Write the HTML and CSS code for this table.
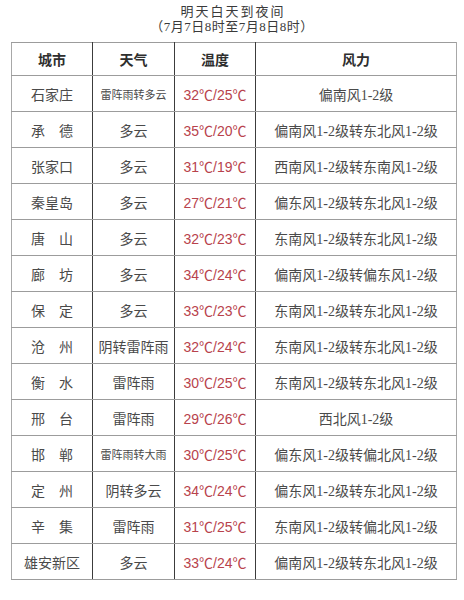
FILE: index.html
```html
<!DOCTYPE html>
<html lang="zh-CN">
<head>
<meta charset="utf-8">
<link rel="stylesheet" href="styles.css">
</head>
<body>
<div class="page">
  <div class="title">
    <div class="t1">明天白天到夜间</div>
    <div class="t2">（7月7日8时至7月8日8时）</div>
  </div>
  <div class="wrap">
    <table class="tbl">
      <colgroup><col class="c1"><col class="c2"><col class="c3"><col class="c4"></colgroup>
      <thead>
        <tr class="head"><th>城市</th><th>天气</th><th>温度</th><th>风力</th></tr>
      </thead>
      <tbody>
        <tr><td class="city">石家庄</td><td class="sm">雷阵雨转多云</td><td class="temp">32℃/25℃</td><td>偏南风1-2级</td></tr>
        <tr><td class="city">承　德</td><td>多云</td><td class="temp">35℃/20℃</td><td>偏南风1-2级转东北风1-2级</td></tr>
        <tr><td class="city">张家口</td><td>多云</td><td class="temp">31℃/19℃</td><td>西南风1-2级转东南风1-2级</td></tr>
        <tr><td class="city">秦皇岛</td><td>多云</td><td class="temp">27℃/21℃</td><td>偏东风1-2级转东北风1-2级</td></tr>
        <tr><td class="city">唐　山</td><td>多云</td><td class="temp">32℃/23℃</td><td>东南风1-2级转东北风1-2级</td></tr>
        <tr><td class="city">廊　坊</td><td>多云</td><td class="temp">34℃/24℃</td><td>偏南风1-2级转偏东风1-2级</td></tr>
        <tr><td class="city">保　定</td><td>多云</td><td class="temp">33℃/23℃</td><td>东南风1-2级转东北风1-2级</td></tr>
        <tr><td class="city">沧　州</td><td>阴转雷阵雨</td><td class="temp">32℃/24℃</td><td>东南风1-2级转东北风1-2级</td></tr>
        <tr><td class="city">衡　水</td><td>雷阵雨</td><td class="temp">30℃/25℃</td><td>东南风1-2级转东北风1-2级</td></tr>
        <tr><td class="city">邢　台</td><td>雷阵雨</td><td class="temp">29℃/26℃</td><td>西北风1-2级</td></tr>
        <tr><td class="city">邯　郸</td><td class="sm">雷阵雨转大雨</td><td class="temp">30℃/25℃</td><td>偏东风1-2级转偏北风1-2级</td></tr>
        <tr><td class="city">定　州</td><td>阴转多云</td><td class="temp">34℃/24℃</td><td>偏东风1-2级转东北风1-2级</td></tr>
        <tr><td class="city">辛　集</td><td>雷阵雨</td><td class="temp">31℃/25℃</td><td>东南风1-2级转偏北风1-2级</td></tr>
        <tr><td class="city">雄安新区</td><td>多云</td><td class="temp">33℃/24℃</td><td>偏南风1-2级转东北风1-2级</td></tr>
      </tbody>
    </table>
  </div>
</div>
</body>
</html>
```
FILE: styles.css
```css
html, body {
  margin: 0;
  padding: 0;
  background: #ffffff;
}
.page {
  width: 464px;
  height: 600px;
  font-family: "Liberation Serif", "Noto Sans CJK SC", serif;
  color: #4a4a4a;
}
.title {
  padding-top: 4px;
  text-align: center;
  color: #3a3a3a;
  font-family: "Liberation Serif", "Noto Sans CJK SC", serif;
}
.t1, .t2 {
  font-size: 13px;
  line-height: 15px;
  height: 15px;
}
.t1 {
  letter-spacing: 2px;
  padding-left: 2px;
}
.t2 {
  letter-spacing: 0.5px;
}
.wrap {
  margin: 8px 0 0 11px;
  width: 445px;
}
.tbl {
  width: 445px;
  border-collapse: collapse;
  table-layout: fixed;
  border: 1px solid #a8a8a8;
}
.c1 { width: 81px; }
.c2 { width: 82px; }
.c3 { width: 81px; }
.c4 { width: 201px; }
.tbl th, .tbl td {
  padding: 0;
  text-align: center;
  white-space: nowrap;
  font-size: 14px;
  border-top: 1px solid #9c9c9c;
  border-bottom: 1px solid #9c9c9c;
  border-left: 1px solid #3c3c3c;
  border-right: 1px solid #3c3c3c;
}
.tbl tr > :first-child { border-left: 1px solid #a8a8a8; }
.tbl tr > :last-child { border-right: 1px solid #a8a8a8; }
.head th {
  height: 32px;
  font-weight: bold;
  color: #2e2e2e;
  font-family: "Noto Sans CJK SC", sans-serif;
}
.tbl tbody td {
  height: 35px;
}
.tbl td.city {
  font-family: "Noto Sans CJK SC", sans-serif;
}
.tbl td.sm {
  font-size: 11px;
  font-family: "Noto Sans CJK SC", sans-serif;
}
.tbl td.temp {
  font-family: "Liberation Sans", "Noto Sans CJK SC", sans-serif;
  color: #b8424c;
  font-size: 14px;
}
```
